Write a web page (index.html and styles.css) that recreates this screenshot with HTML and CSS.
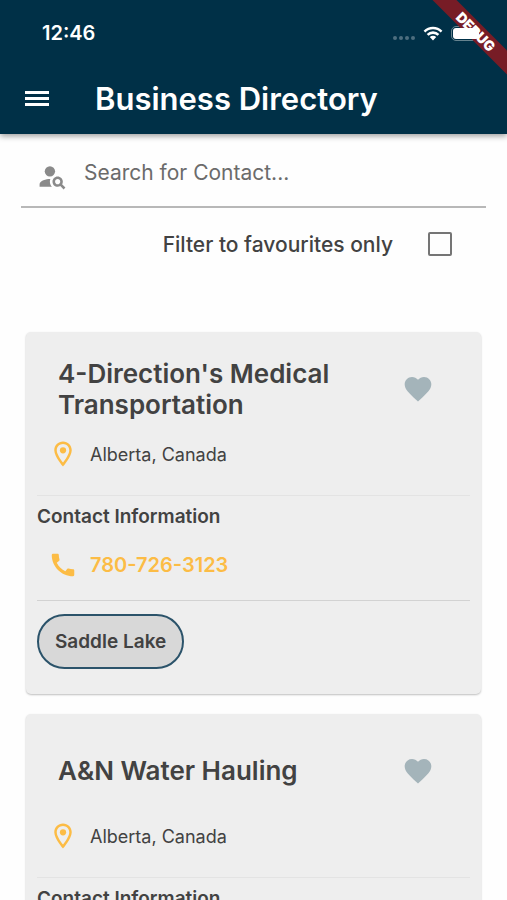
FILE: index.html
```html
<!DOCTYPE html>
<html lang="en">
<head>
<meta charset="utf-8">
<meta name="viewport" content="width=device-width, initial-scale=1">
<title>Business Directory</title>
<link rel="stylesheet" href="styles.css">
</head>
<body>
<svg class="sprite" aria-hidden="true">
  <symbol id="heart" viewBox="0 0 24 24"><path d="M12 21.35l-1.45-1.32C5.4 15.36 2 12.28 2 8.5 2 5.42 4.42 3 7.5 3c1.74 0 3.41.81 4.5 2.09C13.09 3.81 14.76 3 16.5 3 19.58 3 22 5.42 22 8.5c0 3.78-3.4 6.86-8.55 11.54L12 21.35z"/></symbol>
  <symbol id="pin" viewBox="0 0 24 24"><path d="M12 2C8.13 2 5 5.13 5 9c0 5.25 7 13 7 13s7-7.75 7-13c0-3.87-3.13-7-7-7zM7 9c0-2.76 2.24-5 5-5s5 2.24 5 5c0 2.88-2.88 7.19-5 9.88C9.92 16.21 7 11.85 7 9z"/><circle cx="12" cy="9" r="2.5"/></symbol>
  <symbol id="phone" viewBox="0 0 24 24"><path d="M20.01 15.38c-1.23 0-2.42-.2-3.53-.56-.35-.12-.74-.03-1.01.24l-1.57 1.97c-2.83-1.35-5.48-3.9-6.89-6.83l1.95-1.66c.27-.28.35-.67.24-1.02-.37-1.11-.56-2.3-.56-3.53 0-.54-.45-.99-.99-.99H4.19C3.65 3 3 3.24 3 3.99 3 13.28 10.73 21 20.01 21c.71 0 .99-.63.99-1.18v-3.45c0-.54-.45-.99-.99-.99z"/></symbol>
</svg>
<div class="app">
  <header class="header">
    <div class="status">
      <span class="time">12:46</span>
      <span class="dots"><i></i><i></i><i></i><i></i></span>
      <svg class="wifi" viewBox="0 0 20 15" aria-hidden="true">
        <path d="M0.6 5.2a13.4 13.4 0 0 1 18.8 0l-1.7 1.8a11 11 0 0 0-15.4 0zM3.7 8.4a9 9 0 0 1 12.6 0l-1.8 1.9a6.4 6.4 0 0 0-9 0zM6.8 11.6a4.6 4.6 0 0 1 6.4 0L10 14.9z"/>
      </svg>
      <span class="battery"><i></i></span>
    </div>
    <div class="bar">
      <button class="menu" type="button" aria-label="Menu">
        <svg viewBox="0 0 24 18" aria-hidden="true"><path d="M0 1h24v3H0zM0 7h24v3H0zM0 13h24v3H0z"/></svg>
      </button>
      <h1>Business Directory</h1>
    </div>
    <div class="debug"><span>DEBUG</span></div>
  </header>

  <main class="content">
    <div class="search">
      <svg viewBox="0 0 24 24" aria-hidden="true">
        <circle cx="10" cy="8" r="4"/>
        <path d="M10.35 14.01C7.62 13.91 2 15.27 2 18v2h9.54c-2.47-2.76-1.23-5.89-1.19-5.99zM19.43 18.02c.36-.59.57-1.28.57-2.02 0-2.21-1.79-4-4-4s-4 1.79-4 4 1.79 4 4 4c.74 0 1.43-.22 2.02-.57L20.59 22 22 20.59l-2.57-2.57zM16 18c-1.1 0-2-.9-2-2s.9-2 2-2 2 .9 2 2-.9 2-2 2z"/>
      </svg>
      <input type="search" placeholder="Search for Contact..." aria-label="Search for Contact">
    </div>
    <div class="filter">
      <label for="favourites">Filter to favourites only</label>
      <input id="favourites" type="checkbox">
    </div>

    <article class="card">
      <div class="card-head">
        <h2>4-Direction's Medical Transportation</h2>
        <button class="like" type="button" aria-label="Add to favourites"><svg aria-hidden="true"><use href="#heart"/></svg></button>
      </div>
      <p class="line place"><svg aria-hidden="true"><use href="#pin"/></svg>Alberta, Canada</p>
      <section class="contact">
        <h3>Contact Information</h3>
        <a class="line phone" href="tel:780-726-3123"><svg aria-hidden="true"><use href="#phone"/></svg>780-726-3123</a>
      </section>
      <div class="tags"><button class="chip" type="button">Saddle Lake</button></div>
    </article>

    <article class="card">
      <div class="card-head">
        <h2>A&amp;N Water Hauling</h2>
        <button class="like" type="button" aria-label="Add to favourites"><svg aria-hidden="true"><use href="#heart"/></svg></button>
      </div>
      <p class="line place"><svg aria-hidden="true"><use href="#pin"/></svg>Alberta, Canada</p>
      <section class="contact">
        <h3>Contact Information</h3>
      </section>
    </article>
  </main>
</div>
</body>
</html>
```
FILE: styles.css
```css
* { box-sizing: border-box; }

body {
  margin: 0;
  background: #fefefe;
  color: #424242;
  font-family: Inter, "Liberation Sans", sans-serif;
}

h1, h2, h3, p { margin: 0; }

button {
  font: inherit;
  color: inherit;
  border: 0;
  padding: 0;
  background: none;
}

svg { display: block; fill: currentColor; flex: none; }

.sprite { display: none; }

.app {
  display: flex;
  flex-direction: column;
  height: 100vh;
}

/* Header */
.header {
  position: relative;
  flex: none;
  background: #003047;
  color: #fff;
  box-shadow: 0 2px 6px rgba(0, 0, 0, 0.4);
}

.status {
  display: flex;
  align-items: center;
  height: 64px;
  padding: 2px 24px 0 42px;
}

.time {
  flex: 1;
  font-size: 20px;
  font-weight: 600;
}

.dots {
  display: flex;
  gap: 2px;
  margin: 10px 8px 0 0;
}

.dots i {
  width: 4px;
  height: 4px;
  border-radius: 50%;
  background: #4d6e7f;
}

.wifi { width: 20px; height: 16px; margin-right: 8px; }

.battery {
  display: flex;
  width: 32px;
  height: 15px;
  padding: 1px;
  border: 1px solid #66838f;
  border-radius: 5px;
}

.battery i {
  position: relative;
  z-index: 1;
  width: 26px;
  border-radius: 3px;
  background: #fff;
}

.bar {
  display: flex;
  align-items: center;
  gap: 46px;
  height: 70px;
  padding: 0 25px;
}

.menu svg { width: 24px; height: 18px; }

h1 {
  font-size: 31px;
  font-weight: 600;
  line-height: 36px;
}

.debug {
  position: absolute;
  top: 0;
  right: 0;
  width: 76px;
  height: 76px;
  overflow: hidden;
}

.debug span {
  position: absolute;
  top: 23px;
  left: -15px;
  width: 120px;
  background: #771c26;
  font-size: 14px;
  font-weight: 900;
  line-height: 17px;
  text-align: center;
  transform: rotate(45deg);
}

/* Search and filter */
.content {
  flex: 1;
  min-height: 0;
  overflow-y: auto;
  scrollbar-width: none;
}

.search {
  display: flex;
  align-items: center;
  gap: 16px;
  height: 74px;
  margin: 0 21px;
  padding: 6px 16px 0;
  border-bottom: 2px solid #b8b8b8;
}

.search svg { width: 31px; height: 31px; margin-top: 6px; color: #8a8a8a; }

.search input {
  flex: 1;
  min-width: 0;
  border: 0;
  padding: 0;
  outline: 0;
  background: none;
  color: #424242;
  font: 400 21px/28px Inter, "Liberation Sans", sans-serif;
}

.search input::placeholder { color: #6b6b6b; opacity: 1; }

.filter {
  display: flex;
  align-items: center;
  justify-content: flex-end;
  gap: 35px;
  height: 72px;
  margin-bottom: 52px;
  padding-right: 55px;
  font-size: 21px;
  font-weight: 500;
}

.filter input {
  appearance: none;
  width: 24px;
  height: 24px;
  margin: 0;
  border: 2px solid #757575;
  border-radius: 2px;
}

.filter input:checked { background: #003047; }

/* Cards */
.card {
  margin: 0 26px 20px;
  padding: 0 11px 25px;
  border-radius: 5px;
  background: #eeeeee;
  box-shadow: 0 1px 2px rgba(0, 0, 0, 0.25);
}

.card-head {
  display: flex;
  align-items: center;
  justify-content: space-between;
  gap: 24px;
  height: 113px;
  padding: 0 36px 0 21px;
}

h2 {
  font-size: 26px;
  font-weight: 600;
  line-height: 31px;
}

.like svg { width: 32px; height: 32px; color: #a4b4ba; }

.line {
  display: flex;
  align-items: center;
  gap: 12px;
  padding-left: 11px;
}

.line svg { width: 30px; height: 30px; color: #fcbc45; }

.place {
  height: 18px;
  font-size: 18px;
}

.contact {
  margin-top: 32px;
  border-top: 1px solid #e3e3e3;
  border-bottom: 1px solid #d2d2d2;
}

h3 {
  margin-top: 9px;
  font-size: 19px;
  font-weight: 600;
  line-height: 24px;
}

.phone {
  height: 71px;
  color: #fcbc45;
  font-size: 20px;
  font-weight: 600;
  text-decoration: none;
}

.tags { padding-top: 13px; }

.chip {
  height: 55px;
  padding: 0 16px;
  border: 2px solid #2b536a;
  border-radius: 28px;
  background: #d8d8d8;
  font-size: 19px;
  font-weight: 600;
}
```
